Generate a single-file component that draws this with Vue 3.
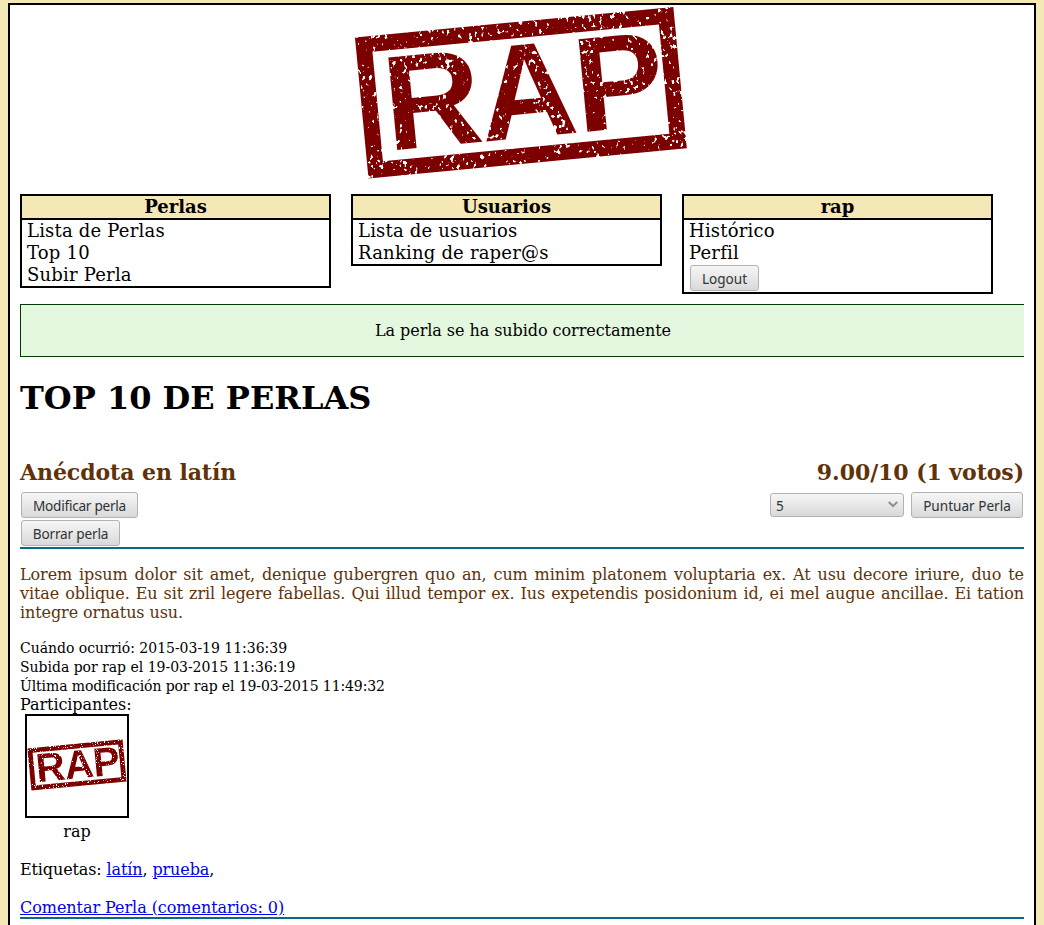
<script setup>
import { h } from 'vue'

const menus = [
  { title: 'Perlas', items: ['Lista de Perlas', 'Top 10', 'Subir Perla'] },
  { title: 'Usuarios', items: ['Lista de usuarios', 'Ranking de raper@s'] },
  { title: 'rap', items: ['Histórico', 'Perfil'], logout: true },
]

const tags = ['latín', 'prueba']

// Rubber-stamp logo, shared by the header and the participant avatar
const opaque = '1 0 0 0 0  0 1 0 0 0  0 0 1 0 0  0 0 0 0 1'
const Stamp = (props) =>
  h('svg', { viewBox: '354 6 334 174', role: 'img', 'aria-label': 'RAP' }, [
    h('defs', [
      h('filter', {
        id: props.fid, filterUnits: 'userSpaceOnUse', x: 350, y: 0, width: 345, height: 185,
        'color-interpolation-filters': 'sRGB',
      }, [
        h('feTurbulence', { type: 'fractalNoise', baseFrequency: '0.26 0.2', numOctaves: 2, seed: 7 }),
        h('feColorMatrix', { type: 'matrix', values: opaque, result: 'fine' }),
        h('feTurbulence', { type: 'fractalNoise', baseFrequency: '0.04', numOctaves: 1, seed: 3 }),
        h('feColorMatrix', { type: 'matrix', values: opaque, result: 'coarse' }),
        h('feComposite', { in: 'fine', in2: 'coarse', operator: 'arithmetic', k1: 0, k2: 1, k3: 0.4, k4: -0.2 }),
        h('feColorMatrix', { type: 'matrix', values: '0 0 0 0 0  0 0 0 0 0  0 0 0 0 0  -14 0 0 0 10.1', result: 'm' }),
        h('feComposite', { in: 'SourceGraphic', in2: 'm', operator: 'in' }),
      ]),
    ]),
    h('g', { filter: `url(#${props.fid})` }, [
      h('g', {
        transform: 'translate(520.9 92.8) rotate(-5.47)', fill: '#7d0000',
        'font-family': 'Liberation Sans, Arial, sans-serif', 'font-weight': 700, 'font-size': 135,
      }, [
        h('rect', { x: -151.9, y: -62.9, width: 303.8, height: 125.8, fill: 'none', stroke: '#7d0000', 'stroke-width': 16 }),
        h('text', { x: -137.6, y: 45 }, 'R'),
        h('text', { x: 6.4, y: 45, 'text-anchor': 'middle' }, 'A'),
        h('text', { x: 53.6, y: 45 }, 'P'),
      ]),
    ]),
  ])
Stamp.props = ['fid']
</script>

<template>
  <div class="page">
    <header class="banner"><Stamp class="logo" fid="grain-logo" /></header>

    <nav class="menus">
      <section v-for="m in menus" :key="m.title" class="menu">
        <div class="menu-title">{{ m.title }}</div>
        <ul>
          <li v-for="i in m.items" :key="i">{{ i }}</li>
        </ul>
        <div v-if="m.logout" class="logout"><button class="btn w-logout">Logout</button></div>
      </section>
    </nav>

    <div class="notice">La perla se ha subido correctamente</div>

    <h1>TOP 10 DE PERLAS</h1>

    <article>
      <div class="heading">
        <h2>Anécdota en latín</h2>
        <h2>9.00/10 (1 votos)</h2>
      </div>
      <div class="actions">
        <div class="left">
          <button class="btn w-mod">Modificar perla</button>
          <button class="btn w-del">Borrar perla</button>
        </div>
        <div class="vote">
          <div class="select">
            <span>5</span>
            <svg width="10" height="7" viewBox="0 0 10 7"><path d="M0.8 1L5 5.2L9.2 1" fill="none" stroke="#8c8e8c" stroke-width="2" /></svg>
          </div>
          <button class="btn w-vote">Puntuar Perla</button>
        </div>
      </div>
      <p class="body">Lorem ipsum dolor sit amet, denique gubergren quo an, cum minim platonem voluptaria ex. At usu decore iriure, duo te vitae oblique. Eu sit zril legere fabellas. Qui illud tempor ex. Ius expetendis posidonium id, ei mel augue ancillae. Ei tation integre ornatus usu.</p>
      <div class="meta">
        <div>Cuándo ocurrió: 2015-03-19 11:36:39</div>
        <div>Subida por rap el 19-03-2015 11:36:19</div>
        <div class="modified">Última modificación por rap el 19-03-2015 11:49:32</div>
      </div>
      <div class="participants">Participantes:</div>
      <figure>
        <div class="avatar"><Stamp class="mini" fid="grain-avatar" /></div>
        <figcaption>rap</figcaption>
      </figure>
      <div class="tags">Etiquetas: <template v-for="t in tags" :key="t"><a href="#">{{ t }}</a>, </template></div>
      <div class="comment"><a href="#">Comentar Perla (comentarios: 0)</a></div>
    </article>
  </div>
</template>

<style>
body { background: #f5e8b7; overflow: hidden; }
</style>

<style scoped>
.page {
  box-sizing: border-box;
  width: 1028px;
  height: 960px;
  margin: 3px 8px 0;
  padding: 0 10px;
  border: 2px solid #000;
  background: #fff;
  color: #000;
  font: 16px/19px "DejaVu Serif", serif;
}
.banner { height: 189px; padding-top: 1px; box-sizing: border-box; }
.logo { display: block; width: 334px; height: 174px; margin-left: 334px; overflow: visible; }
.menus { display: flex; align-items: flex-start; gap: 20px; height: 110px; }
.menu { box-sizing: border-box; width: 311px; border: 2px solid #000; font-size: 18px; line-height: 22px; }
.menu-title { height: 22px; border-bottom: 2px solid #000; background: #f5e8b7; font-weight: bold; text-align: center; }
ul { margin: 0; padding: 0 5px; list-style: none; letter-spacing: 0.2px; }
.logout { height: 28px; box-sizing: border-box; padding: 1px 6px; }
.btn {
  display: block;
  box-sizing: border-box;
  height: 26px;
  padding: 2px 0 0;
  border: 1px solid #b2b2b2;
  border-radius: 3px;
  background: linear-gradient(#f6f6f6, #d9d9d9);
  color: #2e3436;
  font: 13.6px/20px "Noto Sans", sans-serif;
  white-space: nowrap;
  text-align: center;
}
.w-logout { width: 69px; }
.w-mod { width: 117px; letter-spacing: -0.25px; }
.w-del { width: 99px; letter-spacing: -0.18px; }
.w-vote { width: 112px; }
.notice {
  height: 19px;
  padding: 16px 0 16px 1px;
  border: 1px solid #003a00;
  border-right: 0;
  background: #e4f7df;
  text-align: center;
  letter-spacing: -0.06px;
}
h1 { margin: 22px 0 0; font-size: 32px; line-height: 38px; }
.heading { display: flex; justify-content: space-between; margin-top: 42px; color: #5f3208; letter-spacing: -0.07px; }
h2 { margin: 0; font-size: 22px; line-height: 27px; }
.actions {
  display: flex;
  justify-content: space-between;
  align-items: flex-start;
  height: 55px;
  padding: 6px 1px 0;
  border-bottom: 2px solid #0a6885;
}
.left { display: flex; flex-direction: column; gap: 2px; }
.vote { display: flex; align-items: center; gap: 7px; }
.select {
  display: flex;
  align-items: center;
  justify-content: space-between;
  box-sizing: border-box;
  width: 134px;
  height: 24px;
  padding: 1px 5px 0;
  border: 1px solid #b2b2b2;
  border-radius: 3px;
  background: linear-gradient(#f6f6f6, #d9d9d9);
  color: #2e3436;
  font: 13.6px/20px "Noto Sans", sans-serif;
}
.select svg { margin-top: -2px; }
.body { margin: 16px 0 17px; color: #5f3208; text-align: justify; letter-spacing: -0.09px; }
.meta { font-size: 14px; letter-spacing: -0.02px; }
.modified { letter-spacing: -0.1px; }
.participants { height: 18px; line-height: 17px; letter-spacing: -0.07px; }
figure { width: 104px; margin: 0 0 0 5px; text-align: center; }
.avatar { display: flex; align-items: center; justify-content: center; box-sizing: border-box; width: 104px; height: 104px; padding-bottom: 2px; border: 2px solid #000; }
.mini { width: 100px; height: 52px; overflow: visible; }
figcaption { margin-top: 4px; }
.tags { margin-top: 19px; letter-spacing: -0.12px; }
.comment { margin-top: 19px; border-bottom: 2px solid #0a6885; letter-spacing: -0.05px; }
a { color: #0000ee; }
</style>
